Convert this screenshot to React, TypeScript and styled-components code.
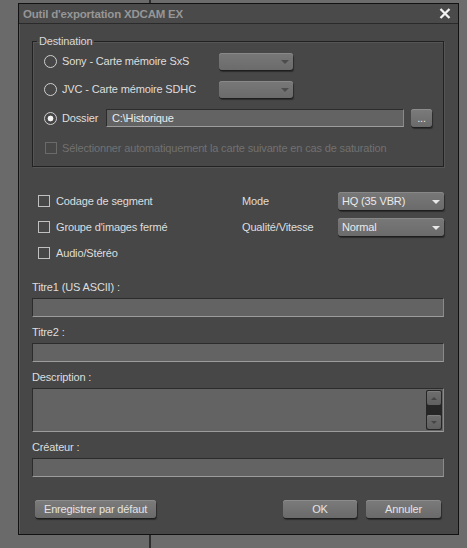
import React from 'react';
import styled, { createGlobalStyle } from 'styled-components';

const GlobalStyle = createGlobalStyle`
  html, body {
    margin: 0;
    padding: 0;
    width: 467px;
    height: 548px;
    overflow: hidden;
    background: linear-gradient(
      to right,
      #6a6a6a 0,
      #6a6a6a 149px,
      #2e2e2e 149px,
      #2e2e2e 151px,
      #6c6c6c 151px
    );
    font-family: 'Liberation Sans', Arial, sans-serif;
    font-size: 11px;
    letter-spacing: -0.15px;
    color: #dedede;
  }
`;

const Desktop = styled.div`
  display: flex;
  padding: 3px 8px 13px 18px;
`;

const Dialog = styled.div`
  box-sizing: border-box;
  display: flex;
  flex-direction: column;
  width: 441px;
  height: 532px;
  background: #474747;
  border: 1px solid #121212;
  box-shadow: inset 1px 1px 0 #5a5a5a;
`;

const TitleBar = styled.div`
  display: flex;
  align-items: center;
  justify-content: space-between;
  height: 19px;
  padding: 0 7px 0 4px;
  background: #4a4a4a;
  border-bottom: 1px solid #2a2a2a;
`;

const Title = styled.span`
  font-weight: bold;
  font-size: 11.5px;
  letter-spacing: -0.2px;
  color: #969696;
`;

const CloseIcon = styled.svg`
  width: 12px;
  height: 11px;
`;

const Body = styled.div`
  display: flex;
  flex-direction: column;
  padding: 12px 14px 0 13px;
`;

const Group = styled.fieldset`
  margin: 0;
  padding: 0 10px 4px 11px;
  border: 1px solid #222222;
  box-shadow: inset 1px 1px 0 #555555, 1px 1px 0 #555555;
  min-width: 0;
`;

const Legend = styled.legend`
  margin-left: -7px;
  padding: 0 2px;
  line-height: 11px;
  color: #d8d8d8;
`;

const GroupRow = styled.div<{ $gap?: number }>`
  display: flex;
  align-items: center;
  height: 28px;
  margin-top: ${({ $gap }) => $gap ?? 0}px;
`;

const Radio = styled.span<{ $checked?: boolean }>`
  box-sizing: border-box;
  flex: none;
  width: 13px;
  height: 13px;
  margin-right: 5px;
  border-radius: 50%;
  border: 1.5px solid #cfcfcf;
  background: ${({ $checked }) =>
    $checked ? 'radial-gradient(circle, #f4f4f4 0 2.6px, transparent 3.2px)' : 'transparent'};
`;

const RadioLabel = styled.span<{ $w: number }>`
  flex: none;
  width: ${({ $w }) => $w}px;
  margin-right: 5px;
  white-space: nowrap;
`;

const Select = styled.div<{ $w: number; $h?: number }>`
  box-sizing: border-box;
  display: flex;
  align-items: center;
  width: ${({ $w }) => $w}px;
  height: ${({ $h }) => $h ?? 18}px;
  padding: 0 4px;
  border-radius: 3px;
  background: linear-gradient(#787878, #6b6b6b);
  box-shadow: inset 0 1px 0 #888888, 0 1px 0 #1e1e1e, 1px 2px 1px #2c2c2c;
  color: #eaeaea;
  white-space: nowrap;
`;

const SelectText = styled.span`
  flex: 1;
`;

const Caret = styled.span<{ $light?: boolean }>`
  width: 0;
  height: 0;
  margin-top: 2px;
  border-left: 4px solid transparent;
  border-right: 4px solid transparent;
  border-top: 4px solid ${({ $light }) => ($light ? '#e8e8e8' : '#4c4c4c')};
`;

const TextInput = styled.div<{ $w?: number; $h?: number }>`
  box-sizing: border-box;
  display: flex;
  align-items: center;
  justify-content: flex-end;
  width: ${({ $w }) => ($w ? `${$w}px` : '100%')};
  height: ${({ $h }) => $h ?? 19}px;
  padding: 0 5px;
  background: #636363;
  border-top: 1px solid #2c2c2c;
  border-left: 1px solid #2c2c2c;
  border-bottom: 1px solid #9c9c9c;
  border-right: 1px solid #8a8a8a;
  color: #ededed;
  white-space: nowrap;
`;

const InputText = styled.span`
  flex: 1;
`;

const Button = styled.div<{ $w: number; $h?: number }>`
  box-sizing: border-box;
  display: flex;
  align-items: center;
  justify-content: center;
  flex: none;
  width: ${({ $w }) => $w}px;
  height: ${({ $h }) => $h ?? 18}px;
  border-radius: 3px;
  background: linear-gradient(#7b7b7b, #6a6a6a);
  box-shadow: inset 0 1px 0 #8c8c8c, 0 1px 0 #1e1e1e, 1px 2px 1px #2c2c2c;
  color: #e4e4e4;
  white-space: nowrap;
`;

const Check = styled.span<{ $disabled?: boolean }>`
  box-sizing: border-box;
  flex: none;
  width: 12px;
  height: 12px;
  border: 1px solid ${({ $disabled }) => ($disabled ? '#6a6a6a' : '#c0c0c0')};
`;

const CheckLabel = styled.span<{ $disabled?: boolean }>`
  margin-left: ${({ $disabled }) => ($disabled ? 5 : 6)}px;
  color: ${({ $disabled }) => ($disabled ? '#717171' : '#dedede')};
  white-space: nowrap;
`;

const Options = styled.div`
  display: grid;
  grid-template-columns: 204px 96px 106px;
  grid-auto-rows: 26px;
  align-items: center;
  margin: 21px 0 0 6px;
`;

const Cell = styled.div`
  display: flex;
  align-items: center;
`;

const Fields = styled.div`
  display: flex;
  flex-direction: column;
  gap: 7px;
  margin-top: 13px;
`;

const Field = styled.div`
  display: flex;
  flex-direction: column;
`;

const FieldLabel = styled.label`
  line-height: 16px;
  margin-bottom: 3px;
`;

const ScrollBar = styled.div`
  display: flex;
  flex-direction: column;
  justify-content: space-between;
  width: 16px;
  height: 40px;
  margin-right: -4px;
  background: #262626;
  border-radius: 2px;
`;

const ScrollButton = styled.div`
  box-sizing: border-box;
  display: flex;
  align-items: center;
  justify-content: center;
  height: 14px;
  margin: 1px;
  border-radius: 2px;
  background: linear-gradient(#6e6e6e, #606060);
  box-shadow: inset 0 1px 0 #7e7e7e;
`;

const Arrow = styled.span<{ $up?: boolean }>`
  width: 0;
  height: 0;
  border-left: 3.5px solid transparent;
  border-right: 3.5px solid transparent;
  ${({ $up }) => ($up ? 'border-bottom' : 'border-top')}: 3.5px solid #454545;
`;

const Footer = styled.div`
  display: flex;
  align-items: center;
  gap: 9px;
  margin-top: 23px;
  padding: 0 3px;
`;

const Spacer = styled.div`
  flex: 1;
`;

export default function App() {
  return (
    <>
      <GlobalStyle />
      <Desktop>
        <Dialog>
          <TitleBar>
            <Title>Outil d'exportation XDCAM EX</Title>
            <CloseIcon viewBox="0 0 12 11">
              <path d="M1.5 1 L10.5 10 M10.5 1 L1.5 10" stroke="#f2f2f2" strokeWidth="2.3" />
            </CloseIcon>
          </TitleBar>
          <Body>
            <Group>
              <Legend>Destination</Legend>
              <GroupRow>
                <Radio />
                <RadioLabel $w={152}>Sony - Carte mémoire SxS</RadioLabel>
                <Select $w={74} $h={17}>
                  <SelectText />
                  <Caret />
                </Select>
              </GroupRow>
              <GroupRow>
                <Radio />
                <RadioLabel $w={152}>JVC - Carte mémoire SDHC</RadioLabel>
                <Select $w={74} $h={17}>
                  <SelectText />
                  <Caret />
                </Select>
              </GroupRow>
              <GroupRow $gap={1}>
                <Radio $checked />
                <RadioLabel $w={39}>Dossier</RadioLabel>
                <TextInput $w={298} $h={18}>
                  <InputText>C:\Historique</InputText>
                </TextInput>
                <Button $w={21} style={{ marginLeft: 7 }}>
                  ...
                </Button>
              </GroupRow>
              <GroupRow $gap={2}>
                <Check $disabled style={{ marginLeft: 1 }} />
                <CheckLabel $disabled>
                  Sélectionner automatiquement la carte suivante en cas de saturation
                </CheckLabel>
              </GroupRow>
            </Group>

            <Options>
              <Cell>
                <Check />
                <CheckLabel>Codage de segment</CheckLabel>
              </Cell>
              <Cell>Mode</Cell>
              <Select $w={106}>
                <SelectText>HQ (35 VBR)</SelectText>
                <Caret $light />
              </Select>
              <Cell>
                <Check />
                <CheckLabel>Groupe d'images fermé</CheckLabel>
              </Cell>
              <Cell>Qualité/Vitesse</Cell>
              <Select $w={106}>
                <SelectText>Normal</SelectText>
                <Caret $light />
              </Select>
              <Cell>
                <Check />
                <CheckLabel>Audio/Stéréo</CheckLabel>
              </Cell>
            </Options>

            <Fields>
              <Field>
                <FieldLabel>Titre1 (US ASCII) :</FieldLabel>
                <TextInput />
              </Field>
              <Field>
                <FieldLabel>Titre2 :</FieldLabel>
                <TextInput />
              </Field>
              <Field>
                <FieldLabel>Description :</FieldLabel>
                <TextInput $h={44}>
                  <ScrollBar>
                    <ScrollButton>
                      <Arrow $up />
                    </ScrollButton>
                    <ScrollButton>
                      <Arrow />
                    </ScrollButton>
                  </ScrollBar>
                </TextInput>
              </Field>
              <Field>
                <FieldLabel>Créateur :</FieldLabel>
                <TextInput />
              </Field>
            </Fields>

            <Footer>
              <Button $w={121}>Enregistrer par défaut</Button>
              <Spacer />
              <Button $w={74}>OK</Button>
              <Button $w={75}>Annuler</Button>
            </Footer>
          </Body>
        </Dialog>
      </Desktop>
    </>
  );
}
